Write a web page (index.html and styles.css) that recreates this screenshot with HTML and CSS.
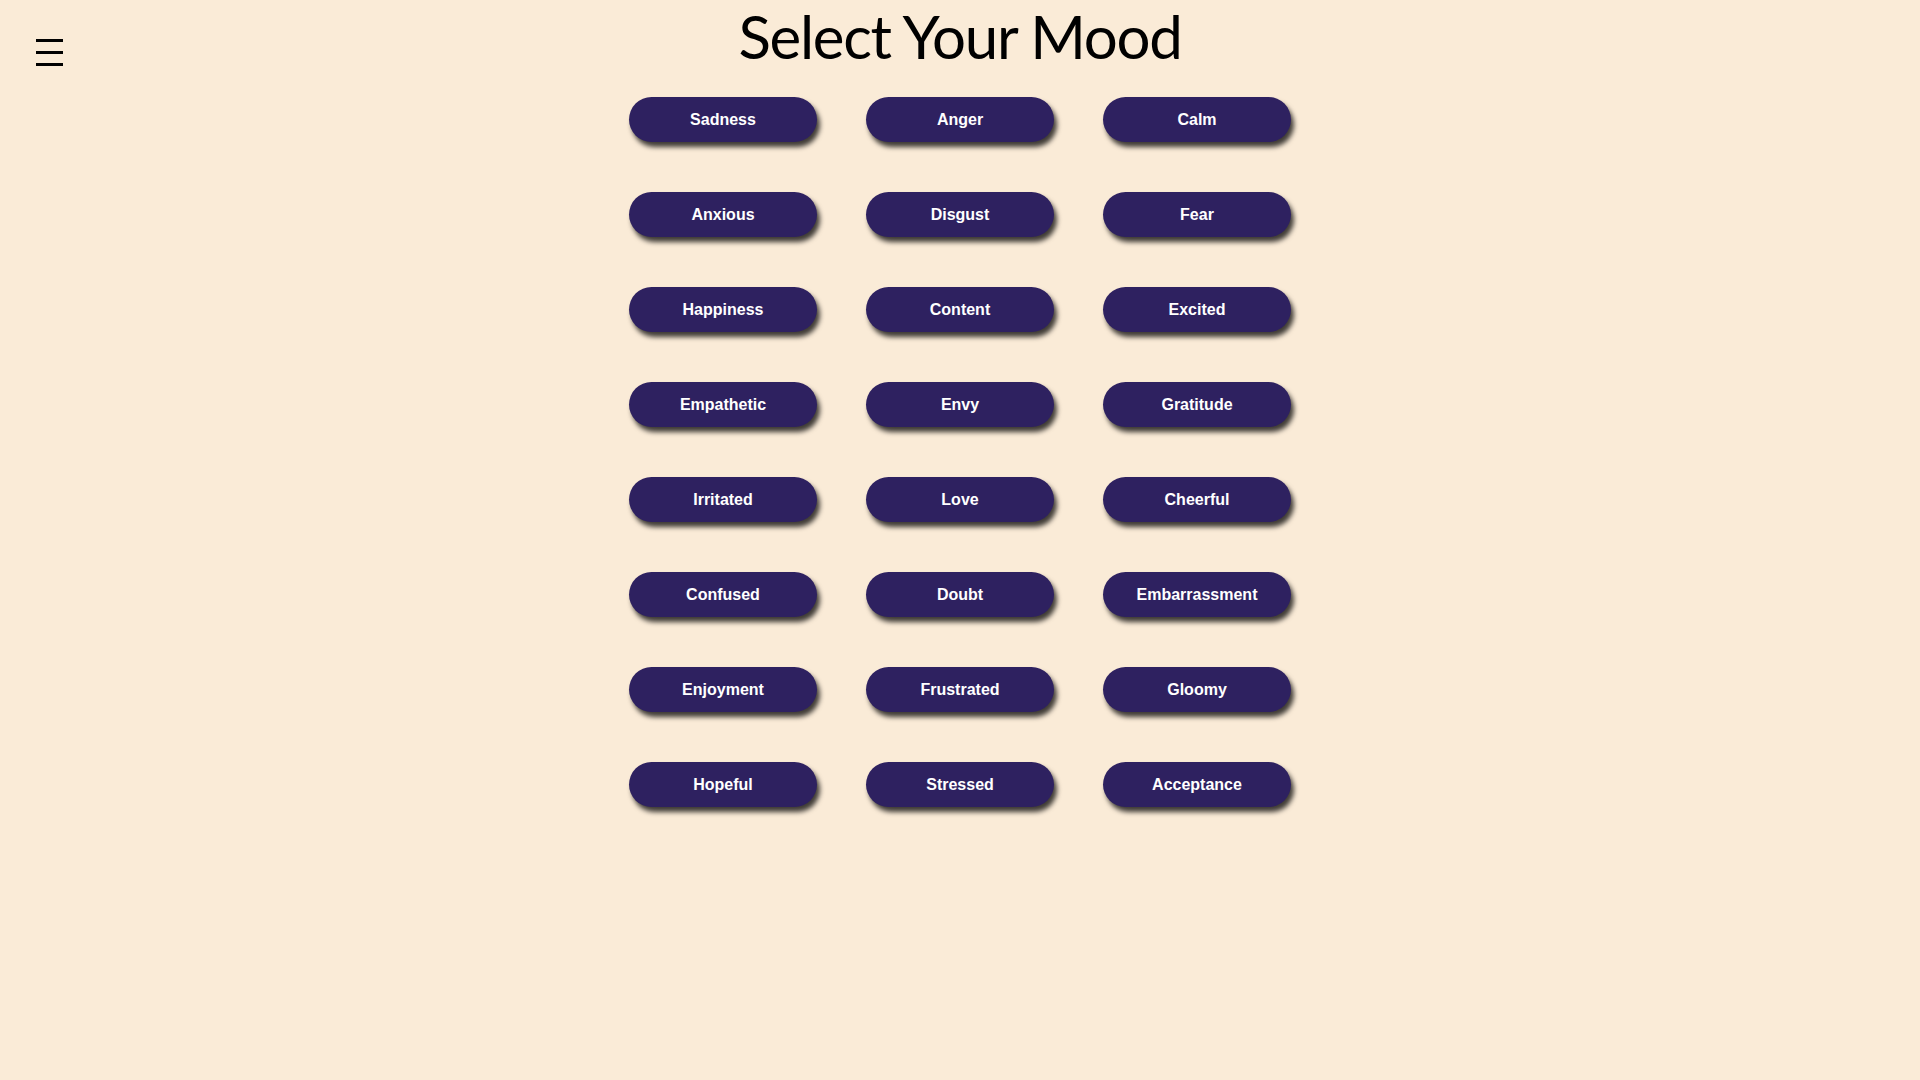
FILE: index.html
```html
<!DOCTYPE html>
<html lang="en">
<head>
<meta charset="utf-8">
<title>Select Your Mood</title>
<link rel="stylesheet" href="styles.css">
</head>
<body>
<button class="menu" aria-label="Menu"><span></span><span></span><span></span></button>
<main class="page">
  <h1 class="title">Select Your Mood</h1>
  <div class="moods">
    <button class="mood">Sadness</button>
    <button class="mood">Anger</button>
    <button class="mood">Calm</button>
    <button class="mood">Anxious</button>
    <button class="mood">Disgust</button>
    <button class="mood">Fear</button>
    <button class="mood">Happiness</button>
    <button class="mood">Content</button>
    <button class="mood">Excited</button>
    <button class="mood">Empathetic</button>
    <button class="mood">Envy</button>
    <button class="mood">Gratitude</button>
    <button class="mood">Irritated</button>
    <button class="mood">Love</button>
    <button class="mood">Cheerful</button>
    <button class="mood">Confused</button>
    <button class="mood">Doubt</button>
    <button class="mood">Embarrassment</button>
    <button class="mood">Enjoyment</button>
    <button class="mood">Frustrated</button>
    <button class="mood">Gloomy</button>
    <button class="mood">Hopeful</button>
    <button class="mood">Stressed</button>
    <button class="mood">Acceptance</button>
  </div>
</main>
</body>
</html>
```
FILE: styles.css
```css
html, body {
  margin: 0;
  padding: 0;
}
body {
  background: #faebd7;
  min-height: 1080px;
  font-family: "Liberation Sans", Arial, sans-serif;
}
.menu {
  position: absolute;
  left: 36px;
  top: 39px;
  width: 27px;
  height: 27px;
  padding: 0;
  border: 0;
  background: none;
  display: flex;
  flex-direction: column;
  justify-content: space-between;
  cursor: pointer;
}
.menu span {
  display: block;
  height: 3px;
  background: #000;
}
.page {
  display: flex;
  flex-direction: column;
  align-items: center;
}
.title {
  margin: 0;
  font-family: Lato, "Open Sans", sans-serif;
  font-weight: 400;
  font-size: 60px;
  line-height: 72px;
  color: #000;
  letter-spacing: -1.3px;
}
.moods {
  margin-top: 25px;
  display: grid;
  grid-template-columns: repeat(3, 188px);
  column-gap: 49px;
  row-gap: 50px;
}
.mood {
  width: 188px;
  height: 45px;
  border: 0;
  border-radius: 23px;
  background: #2e2160;
  color: #fff;
  font-family: "Liberation Sans", Arial, sans-serif;
  font-weight: 700;
  font-size: 16px;
  box-shadow: 3px 5px 5px rgba(0, 0, 0, 0.75);
  cursor: pointer;
}
```
